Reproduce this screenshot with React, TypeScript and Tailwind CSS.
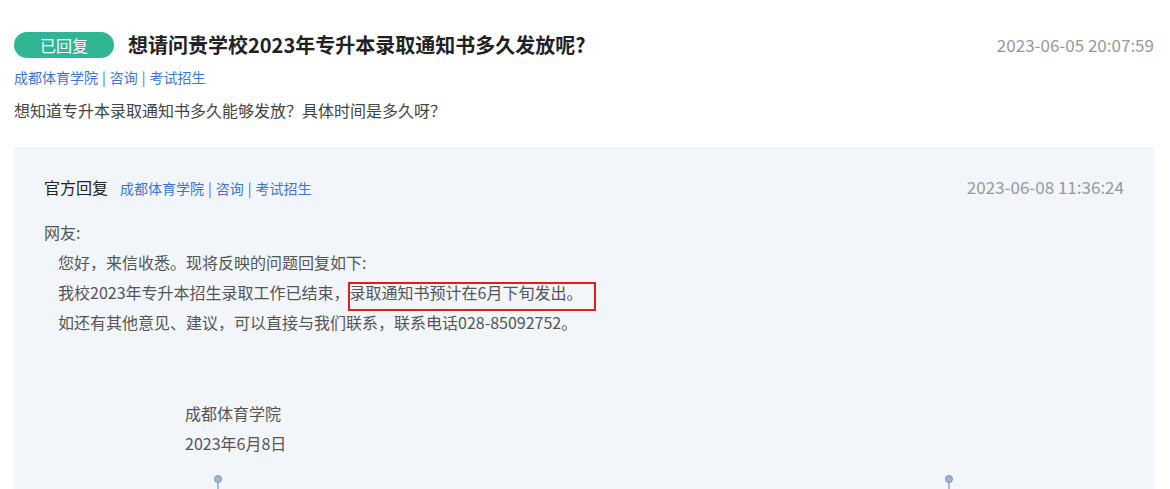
import React from "react";

const font = { fontFamily: '"Noto Sans CJK SC", "Noto Sans", sans-serif' };

function Links() {
  return (
    <span className="text-[14px] text-[#3d76d1]">
      成都体育学院<span className="mx-[4px]">|</span>咨询<span className="mx-[4px]">|</span>考试招生
    </span>
  );
}

function Pin() {
  return (
    <svg width="10" height="16" viewBox="0 0 10 16" className="block">
      <circle cx="5" cy="5" r="3.5" fill="#9fb3d3" stroke="#7f96bd" strokeWidth="1" />
      <rect x="4.3" y="8" width="1.4" height="8" fill="#8aa0c4" />
    </svg>
  );
}

export default function App() {
  return (
    <div className="w-[1170px] h-[489px] overflow-hidden bg-white" style={font}>
      <div className="ml-[14px] w-[1140px] pt-[32px]">
        <div className="flex items-center h-[26px]">
          <span className="flex items-center justify-center w-[100px] h-[26px] rounded-full bg-[#2fb594] text-white text-[16px]">
            已回复
          </span>
          <span className="ml-[14px] text-[20px] font-bold text-[#222]">
            想请问贵学校2023年专升本录取通知书多久发放呢?
          </span>
          <span className="ml-auto text-[17px] text-[#999]">2023-06-05 20:07:59</span>
        </div>
        <div className="mt-[7px] leading-[22px]">
          <Links />
        </div>
        <div className="mt-[10px] text-[16px] leading-[24px] text-[#444]">
          想知道专升本录取通知书多久能够发放？具体时间是多久呀？
        </div>
        <div className="mt-[25px] bg-[#f2f5fa] px-[30px] pt-[29px] h-[400px]">
          <div className="flex items-center h-[22px]">
            <span className="text-[16px] text-[#222]">官方回复</span>
            <span className="ml-[12px]">
              <Links />
            </span>
            <span className="ml-auto text-[17px] text-[#999]">2023-06-08 11:36:24</span>
          </div>
          <div className="mt-[19px] text-[16px] leading-[30px] text-[#555]">
            <div>网友:</div>
            <div className="pl-[14px]">您好，来信收悉。现将反映的问题回复如下:</div>
            <div className="pl-[14px]">
              我校2023年专升本招生录取工作已结束，
              <span className="relative">
                录取通知书预计在6月下旬发出。
                <span className="absolute left-[-2px] right-[-14px] top-[2px] bottom-[-7px] border-[2px] border-[#e01e1e]" />
              </span>
            </div>
            <div className="pl-[14px]">如还有其他意见、建议，可以直接与我们联系，联系电话028-85092752。</div>
            <div className="h-[61px]" />
            <div className="pl-[141px]">成都体育学院</div>
            <div className="pl-[141px]">2023年6月8日</div>
          </div>
          <div className="flex mt-[16px]">
            <div className="ml-[169px]">
              <Pin />
            </div>
            <div className="ml-[721px]">
              <Pin />
            </div>
          </div>
        </div>
      </div>
    </div>
  );
}
